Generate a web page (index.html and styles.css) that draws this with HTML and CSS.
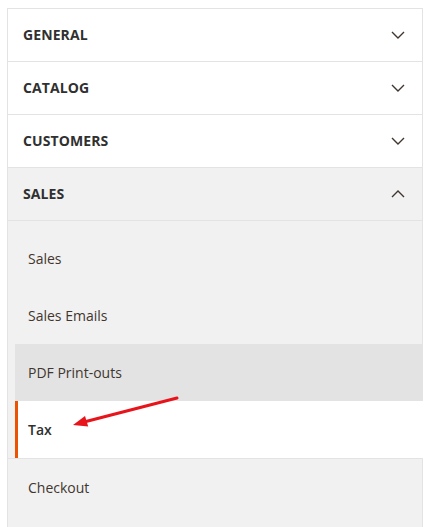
FILE: index.html
```html
<!DOCTYPE html>
<html lang="en">
<head>
<meta charset="utf-8">
<title>Configuration</title>
<link rel="stylesheet" href="styles.css">
</head>
<body>
<div class="nav">
  <div class="nav-title">
    <strong>General</strong>
    <svg class="chev" viewBox="0 0 14 8" width="14" height="8"><polyline points="1,1 7,7 13,1"/></svg>
  </div>
  <div class="nav-title">
    <strong>Catalog</strong>
    <svg class="chev" viewBox="0 0 14 8" width="14" height="8"><polyline points="1,1 7,7 13,1"/></svg>
  </div>
  <div class="nav-title">
    <strong>Customers</strong>
    <svg class="chev" viewBox="0 0 14 8" width="14" height="8"><polyline points="1,1 7,7 13,1"/></svg>
  </div>
  <div class="nav-title is-open">
    <strong>Sales</strong>
    <svg class="chev" viewBox="0 0 14 8" width="14" height="8"><polyline points="1,7 7,1 13,7"/></svg>
  </div>
  <ul class="nav-items">
    <li class="nav-item"><a class="nav-link">Sales</a></li>
    <li class="nav-item"><a class="nav-link">Sales Emails</a></li>
    <li class="nav-item"><a class="nav-link is-hover">PDF Print-outs</a></li>
    <li class="nav-item is-active"><a class="nav-link">Tax</a></li>
    <li class="nav-item"><a class="nav-link">Checkout</a></li>
  </ul>
</div>
<svg class="arrow" viewBox="0 0 431 527" width="431" height="527">
  <line x1="177" y1="398" x2="84" y2="422" />
  <polygon points="73,425 88.2,426.6 85.0,416.0" />
</svg>
</body>
</html>
```
FILE: styles.css
```css
html, body {
  margin: 0;
  padding: 0;
  background: #ffffff;
}
body {
  padding: 8px 0 0 7px;
  font-family: "Open Sans", "Liberation Sans", sans-serif;
  color: #303030;
  position: relative;
}
.nav {
  width: 414px;
  border: 1px solid #e3e3e3;
  border-bottom: none;
}
.nav-title {
  height: 52px;
  border-bottom: 1px solid #e3e3e3;
  display: flex;
  align-items: center;
  justify-content: space-between;
  padding: 0 17px 0 15px;
  background: #ffffff;
}
.nav-title strong {
  font-size: 14px;
  font-weight: 700;
  text-transform: uppercase;
  letter-spacing: 0.1px;
  color: #303030;
  position: relative;
  top: -1px;
}
.nav-title.is-open {
  background: #f1f1f1;
}
.chev {
  display: block;
  fill: none;
  stroke: #41362f;
  stroke-width: 1.4;
}
.nav-items {
  list-style: none;
  margin: 0;
  padding: 9px 0 11px 0;
  background: #f1f1f1;
}
.nav-item {
  display: block;
  margin-right: -1px;
}
.nav-link {
  display: flex;
  align-items: center;
  height: 57px;
  margin-left: 7px;
  padding-left: 10px;
  border-left: 3px solid transparent;
  font-size: 14px;
  color: #41362f;
}
.nav-link.is-hover {
  background: #e3e3e3;
}
.nav-item.is-active {
  border-bottom: 1px solid #e3e3e3;
  margin-left: -1px;
}
.nav-item.is-active .nav-link {
  background: #ffffff;
  border-left-color: #eb5202;
  margin-left: 8px;
  color: #303030;
  font-weight: 600;
}
.arrow {
  position: absolute;
  top: 0;
  left: 0;
  pointer-events: none;
}
.arrow line {
  stroke: #e8141b;
  stroke-width: 3;
  stroke-linecap: round;
}
.arrow polygon {
  fill: #e8141b;
}
```
